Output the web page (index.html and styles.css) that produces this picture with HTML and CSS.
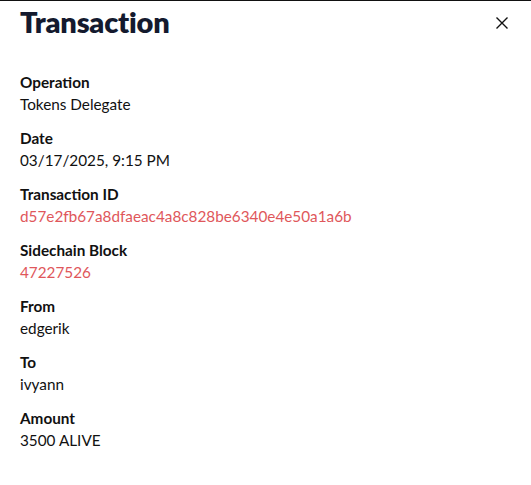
FILE: index.html
```html
<!DOCTYPE html>
<html lang="en">
<head>
  <meta charset="UTF-8">
  <title>Transaction</title>
  <link rel="stylesheet" href="styles.css">
</head>
<body>
  <div class="panel">
    <div class="panel-head">
      <h2>Transaction</h2>
      <button class="close" aria-label="Close">
        <svg width="14" height="14" viewBox="0 0 14 14"><path d="M1.5 1.5 L12.5 12.5 M12.5 1.5 L1.5 12.5" stroke="#111" stroke-width="1.4" fill="none"/></svg>
      </button>
    </div>

    <dl class="fields">
      <div class="field">
        <dt>Operation</dt>
        <dd>Tokens Delegate</dd>
      </div>
      <div class="field">
        <dt>Date</dt>
        <dd>03/17/2025, 9:15 PM</dd>
      </div>
      <div class="field">
        <dt>Transaction ID</dt>
        <dd class="link">d57e2fb67a8dfaeac4a8c828be6340e4e50a1a6b</dd>
      </div>
      <div class="field">
        <dt>Sidechain Block</dt>
        <dd class="link">47227526</dd>
      </div>
      <div class="field">
        <dt>From</dt>
        <dd>edgerik</dd>
      </div>
      <div class="field">
        <dt>To</dt>
        <dd>ivyann</dd>
      </div>
      <div class="field">
        <dt>Amount</dt>
        <dd>3500 ALIVE</dd>
      </div>
    </dl>
  </div>
</body>
</html>
```

FILE: styles.css
```css
body {
  margin: 0;
  font-family: "Lato", "Noto Sans", sans-serif;
  color: #111;
  background: #fff;
}

.panel {
  border-top: 1px solid #111;
  padding: 0 20px;
}

.panel-head {
  display: flex;
  justify-content: space-between;
  align-items: center;
  height: 40px;
}

h2 {
  margin: 0;
  font-size: 29px;
  font-weight: 800;
  letter-spacing: -0.2px;
  color: #141a2e;
}

.close {
  background: none;
  border: none;
  padding: 0;
  margin: 3px 2px 0 0;
  cursor: pointer;
  display: flex;
}

.fields {
  margin: 30px 0 0;
  display: flex;
  flex-direction: column;
  gap: 12px;
}

.field dt {
  font-weight: 700;
  font-size: 15.3px;
  line-height: 22px;
}

.field dd {
  margin: 0;
  font-size: 15.3px;
  line-height: 22px;
}

.field dd.link {
  color: #e0575b;
}
```
